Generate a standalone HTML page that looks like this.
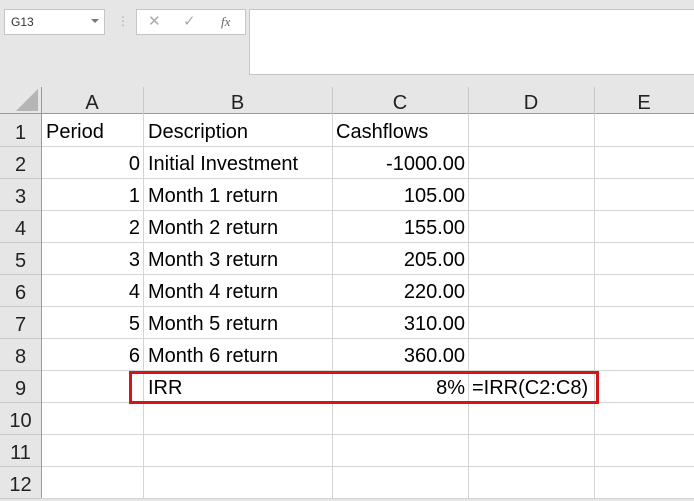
<!DOCTYPE html><html><head><style>
body{margin:0;width:694px;height:498px;overflow:hidden;background:#e6e6e6;font-family:"Liberation Sans",sans-serif;position:relative}
.a{position:absolute;box-sizing:border-box}
.t{position:absolute;font-size:20px;color:#000;line-height:32px;white-space:nowrap}
.h{position:absolute;font-size:20px;color:#222;line-height:28px;text-align:center}
</style></head><body>
<div class="a" style="left:4px;top:9px;width:101px;height:26px;background:#fff;border:1px solid #c6c6c6"></div>
<div class="t" style="left:11px;top:6px;font-size:12px;color:#333">G13</div>
<div class="a" style="left:91px;top:19px;border-left:4px solid transparent;border-right:4px solid transparent;border-top:4px solid #777"></div>
<div class="t" style="left:117px;top:5px;font-size:12px;color:#aaa">⋮</div>
<div class="a" style="left:136px;top:9px;width:110px;height:26px;background:#fff;border:1px solid #c6c6c6"></div>
<div class="t" style="left:148px;top:6px;font-size:15px;color:#aaa">✕</div>
<div class="t" style="left:183px;top:6px;font-size:15px;color:#aaa">✓</div>
<div class="t" style="left:221px;top:6px;font-size:13px;color:#666;font-style:italic;font-family:'Liberation Serif',serif">fx</div>
<div class="a" style="left:249px;top:9px;width:445px;height:66px;background:#fff;border:1px solid #c6c6c6;border-right:none"></div>
<div class="a" style="left:0;top:87px;width:694px;height:27px;background:#e6e6e6"></div>
<svg class="a" style="left:16px;top:89px" width="22" height="22"><polygon points="22,0 22,22 0,22" fill="#b5b5b5"/></svg>
<div class="a" style="left:41px;top:114px;width:653px;height:384px;background:#fff"></div>
<div class="a" style="left:0;top:113px;width:694px;height:1px;background:#9a9a9a"></div>
<div class="a" style="left:41px;top:87px;width:1px;height:411px;background:#9a9a9a"></div>
<div id="g"></div>
<div class="h" style="left:41px;top:89px;width:102px">A</div>
<div class="h" style="left:143px;top:89px;width:189px">B</div>
<div class="h" style="left:332px;top:89px;width:136px">C</div>
<div class="h" style="left:468px;top:89px;width:126px">D</div>
<div class="h" style="left:594px;top:89px;width:100px">E</div>
<script>
var s='';var cols=[143,332,468,594];
cols.forEach(function(x){s+='<div class="a" style="left:'+x+'px;top:87px;width:1px;height:27px;background:#c8c8c8"></div><div class="a" style="left:'+x+'px;top:114px;width:1px;height:384px;background:#d4d4d4"></div>';});
for(var i=1;i<=12;i++){var y=114+i*32;s+='<div class="a" style="left:0;top:'+y+'px;width:41px;height:1px;background:#c8c8c8"></div><div class="a" style="left:42px;top:'+y+'px;width:652px;height:1px;background:#d4d4d4"></div>';
s+='<div class="h" style="left:0;top:'+(114+(i-1)*32+3)+'px;width:41px;line-height:32px">'+i+'</div>';}
var d=[['Period','Description','Cashflows'],['0','Initial Investment','-1000.00'],['1','Month 1 return','105.00'],['2','Month 2 return','155.00'],['3','Month 3 return','205.00'],['4','Month 4 return','220.00'],['5','Month 5 return','310.00'],['6','Month 6 return','360.00']];
d.forEach(function(r,i){var y=114+i*32+2;
if(i==0)s+='<div class="t" style="left:46px;top:'+y+'px">'+r[0]+'</div><div class="t" style="left:336px;top:'+y+'px">'+r[2]+'</div>';
else s+='<div class="t" style="right:'+(694-140)+'px;top:'+y+'px">'+r[0]+'</div><div class="t" style="right:'+(694-465)+'px;top:'+y+'px">'+r[2]+'</div>';
s+='<div class="t" style="left:148px;top:'+y+'px">'+r[1]+'</div>';});
s+='<div class="t" style="left:148px;top:372px">IRR</div><div class="t" style="right:229px;top:372px">8%</div><div class="t" style="left:472px;top:372px">=IRR(C2:C8)</div>';
s+='<div class="a" style="left:129px;top:371px;width:470px;height:33px;border:3px solid #d0151b"></div>';
document.getElementById('g').innerHTML=s;
</script>
</body></html>
